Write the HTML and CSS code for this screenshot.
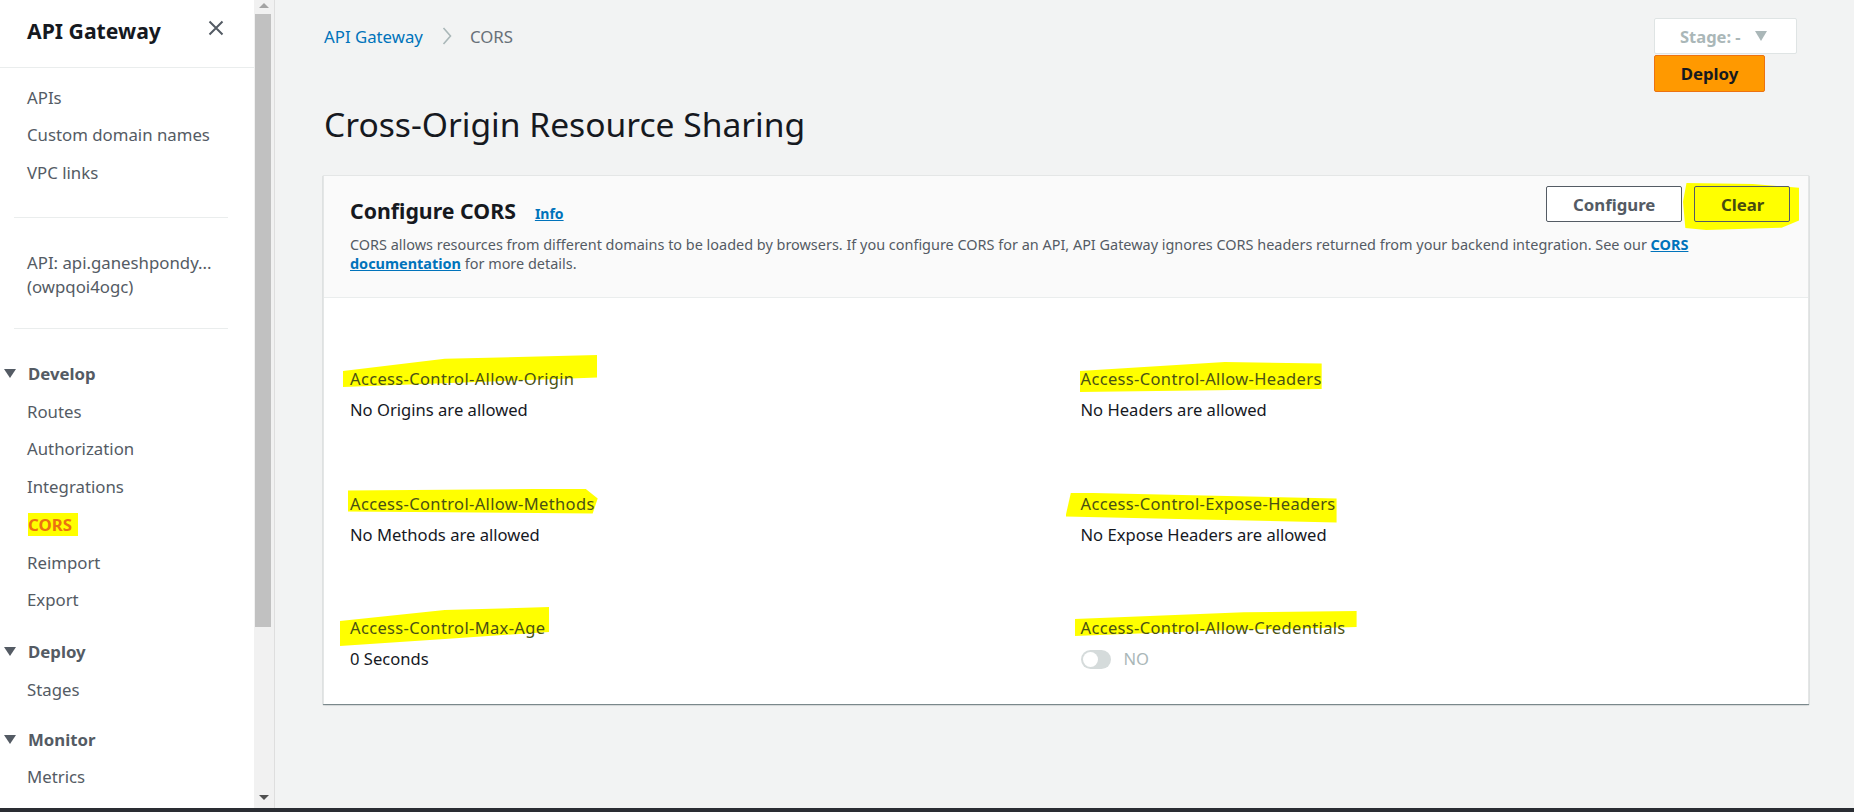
FILE: index.html
```html
<!DOCTYPE html>
<html lang="en">
<head>
<meta charset="utf-8">
<title>API Gateway - CORS</title>
<link rel="stylesheet" href="styles.css">
</head>
<body>
<div class="app">
  <aside class="sidebar">
    <div class="side-head">
      <span class="side-title">API Gateway</span>
      <svg class="close-icon" width="16" height="16" viewBox="0 0 16 16"><path d="M1.5 1.5 L14.5 14.5 M14.5 1.5 L1.5 14.5" stroke="#545b64" stroke-width="2" fill="none"/></svg>
    </div>
    <ul class="nav-list top-list">
      <li class="nav-item">APIs</li>
      <li class="nav-item">Custom domain names</li>
      <li class="nav-item">VPC links</li>
    </ul>
    <div class="side-div"></div>
    <div class="api-name">API: api.ganeshpondy...<br>(owpqoi4ogc)</div>
    <div class="side-div second"></div>
    <div class="section first">
      <div class="sec-head"><span class="caret"></span>Develop</div>
      <ul class="nav-list">
        <li class="nav-item">Routes</li>
        <li class="nav-item">Authorization</li>
        <li class="nav-item">Integrations</li>
        <li class="nav-item"><span class="active-hl">CORS</span></li>
        <li class="nav-item">Reimport</li>
        <li class="nav-item">Export</li>
      </ul>
    </div>
    <div class="section">
      <div class="sec-head"><span class="caret"></span>Deploy</div>
      <ul class="nav-list">
        <li class="nav-item">Stages</li>
      </ul>
    </div>
    <div class="section last">
      <div class="sec-head"><span class="caret"></span>Monitor</div>
      <ul class="nav-list">
        <li class="nav-item">Metrics</li>
      </ul>
    </div>
  </aside>
  <div class="scrollbar">
    <span class="sb-up"></span>
    <span class="sb-thumb"></span>
    <span class="sb-down"></span>
  </div>
  <main class="main">
    <div class="topbar">
      <div class="breadcrumb">
        <a class="crumb-link">API Gateway</a>
        <svg class="crumb-sep" width="10" height="18" viewBox="0 0 10 18"><path d="M1.5 1 L8.5 9 L1.5 17" stroke="#aab7b8" stroke-width="1.6" fill="none"/></svg>
        <span class="crumb-cur">CORS</span>
      </div>
      <div class="deploy-box">
        <div class="stage-btn"><span>Stage: -</span><span class="stage-caret"></span></div>
        <div class="deploy-btn">Deploy</div>
      </div>
    </div>
    <h1 class="page-title">Cross-Origin Resource Sharing</h1>
    <section class="card">
      <div class="card-head">
        <div class="card-row">
          <h2 class="card-title">Configure CORS</h2>
          <a class="info-link">Info</a>
          <div class="card-actions">
            <button class="btn">Configure</button>
            <button class="btn btn-clear">Clear</button>
          </div>
        </div>
        <p class="card-desc">CORS allows resources from different domains to be loaded by browsers. If you configure CORS for an API, API Gateway ignores CORS headers returned from your backend integration. See our <a class="doc-link">CORS<br>documentation</a> for more details.</p>
      </div>
      <div class="card-body">
        <div class="field">
          <div class="label"><span class="hl hl-1">Access-Control-Allow-Origin</span></div>
          <div class="value">No Origins are allowed</div>
        </div>
        <div class="field">
          <div class="label"><span class="hl hl-4">Access-Control-Allow-Headers</span></div>
          <div class="value">No Headers are allowed</div>
        </div>
        <div class="field">
          <div class="label"><span class="hl hl-2">Access-Control-Allow-Methods</span></div>
          <div class="value">No Methods are allowed</div>
        </div>
        <div class="field">
          <div class="label"><span class="hl hl-5">Access-Control-Expose-Headers</span></div>
          <div class="value">No Expose Headers are allowed</div>
        </div>
        <div class="field">
          <div class="label"><span class="hl hl-3">Access-Control-Max-Age</span></div>
          <div class="value">0 Seconds</div>
        </div>
        <div class="field">
          <div class="label"><span class="hl hl-6">Access-Control-Allow-Credentials</span></div>
          <div class="value toggle-row"><span class="toggle"><span class="knob"></span></span><span class="toggle-text">NO</span></div>
        </div>
      </div>
    </section>
  </main>
</div>
<div class="taskbar"></div>
</body>
</html>
```
FILE: styles.css
```css
* { box-sizing: border-box; }
html, body { margin: 0; padding: 0; }
body {
  font-family: "Noto Sans", "Open Sans", sans-serif;
  color: #16191f;
  background: #f2f3f3;
  overflow: hidden;
}
ul { list-style: none; margin: 0; padding: 0; }

.app {
  display: flex;
  height: 808px;
  overflow: hidden;
}

/* ---------- Sidebar ---------- */
.sidebar {
  width: 254px;
  flex: none;
  background: #ffffff;
  overflow: hidden;
}
.side-head {
  display: flex;
  align-items: flex-start;
  height: 68px;
  border-bottom: 1px solid #eaeded;
}
.side-title {
  margin: 16px 0 0 27px;
  font-size: 21.2px;
  font-weight: 700;
  line-height: 30px;
  color: #16191f;
}
.close-icon {
  margin: 20px 30px 0 auto;
  flex: none;
}
.top-list { padding-top: 11px; }
.nav-item {
  font-size: 16.8px;
  line-height: 22.5px;
  padding: 7.5px 0 7.5px 27px;
  color: #545b64;
  white-space: nowrap;
}
.side-div {
  margin: 25px 0 0 14px;
  width: 214px;
  border-top: 1px solid #eaeded;
}
.side-div.second { margin-top: 29px; }
.api-name {
  margin-top: 33px;
  padding-left: 27px;
  font-size: 16.8px;
  line-height: 24px;
  color: #545b64;
}
.section { margin-top: 13px; }
.section.first { margin-top: 25.5px; }
.section.last { margin-top: 11px; }
.sec-head {
  display: flex;
  align-items: center;
  height: 39px;
  padding-left: 4px;
  font-size: 16.8px;
  font-weight: 700;
  color: #545b64;
}
.caret {
  width: 0;
  height: 0;
  border-left: 6px solid transparent;
  border-right: 6px solid transparent;
  border-top: 9px solid #545b64;
  margin-right: 12px;
}
.active-hl {
  display: inline-block;
  background: #ffff00;
  color: #ec7211;
  font-weight: 700;
  line-height: 23px;
  padding-right: 6px;
  margin-left: 1px;
}

/* ---------- Scrollbar ---------- */
.scrollbar {
  width: 21px;
  flex: none;
  background: #f1f1f1;
  border-right: 1px solid #dedede;
  display: flex;
  flex-direction: column;
  align-items: center;
}
.sb-up {
  margin-top: 3px;
  width: 0; height: 0;
  border-left: 5px solid transparent;
  border-right: 5px solid transparent;
  border-bottom: 5px solid #a3a3a3;
}
.sb-thumb {
  margin-top: 6px;
  width: 16px;
  height: 613px;
  background: #c1c1c1;
  margin-left: -2px;
}
.sb-down {
  margin-top: auto;
  margin-bottom: 8px;
  width: 0; height: 0;
  border-left: 5px solid transparent;
  border-right: 5px solid transparent;
  border-top: 5px solid #505050;
}

/* ---------- Main ---------- */
.main {
  flex: 1;
  padding: 0 45px 0 48px;
  background: #f2f3f3;
}
.topbar {
  display: flex;
  justify-content: space-between;
  align-items: flex-start;
  padding-top: 18px;
}
.breadcrumb {
  display: flex;
  align-items: center;
  height: 36px;
  font-size: 16.8px;
  padding-left: 1px;
}
.crumb-link { color: #0073bb; }
.crumb-sep { margin: 0 18px 0 19px; }
.crumb-cur { color: #687078; }
.deploy-box {
  display: flex;
  flex-direction: column;
  align-items: flex-start;
  margin-right: 12px;
}
.stage-btn {
  width: 143px;
  height: 36px;
  background: #ffffff;
  border: 1px solid #dfe4e4;
  border-radius: 2px;
  display: flex;
  align-items: center;
  padding-left: 25px;
  font-size: 16.5px;
  font-weight: 700;
  color: #aab7b8;
}
.stage-caret {
  margin-left: 14px;
  width: 0; height: 0;
  border-left: 6px solid transparent;
  border-right: 6px solid transparent;
  border-top: 10px solid #aab7b8;
}
.deploy-btn {
  margin-top: 1px;
  width: 111px;
  height: 37px;
  background: #ff9900;
  border: 1px solid #ec7211;
  border-radius: 2px;
  display: flex;
  align-items: center;
  justify-content: center;
  font-size: 16.8px;
  font-weight: 700;
  color: #16191f;
}
.page-title {
  margin: 10px 0 29px 1px;
  font-size: 33.6px;
  font-weight: 400;
  line-height: 44px;
  color: #16191f;
}

/* ---------- Card ---------- */
.card {
  background: #ffffff;
  border: 1px solid #e4e6e6;
  border-bottom: none;
  box-shadow: 0 1px 1px 0 rgba(0, 28, 36, 0.45), 0 2px 2px -1px rgba(0, 28, 36, 0.12);
}
.card-head {
  position: relative;
  z-index: 0;
  background: #fafafa;
  border-bottom: 1px solid #eaeded;
  padding: 10px 18px 24px 26px;
}
.card-row {
  display: flex;
  align-items: flex-start;
}
.card-title {
  margin: 7px 0 0 0;
  font-size: 21.3px;
  font-weight: 700;
  line-height: 36px;
  color: #16191f;
}
.info-link {
  margin: 18px 0 0 19px;
  font-size: 14px;
  font-weight: 700;
  line-height: 20px;
  color: #0073bb;
  text-decoration: underline;
}
.card-actions {
  margin-left: auto;
  display: flex;
  gap: 12px;
}
.btn {
  height: 36px;
  padding: 0 26px;
  background: #ffffff;
  border: 1px solid #545b64;
  border-radius: 2px;
  font-family: inherit;
  font-size: 16.8px;
  font-weight: 700;
  color: #545b64;
}
.btn:first-child { width: 136px; }
.btn-clear {
  position: relative;
  width: 96px;
  background: #ffff00;
  color: #474c10;
}
.btn-clear::before {
  content: "";
  position: absolute;
  left: -12px;
  right: -10px;
  top: -4px;
  bottom: -9px;
  background: #ffff00;
  z-index: -1;
  clip-path: polygon(3% 0, 60% 2%, 100% 10%, 100% 80%, 85% 95%, 20% 100%, 2% 96%, 0 40%);
}
.card-desc {
  margin: 7px 0 0 0;
  font-size: 14.45px;
  line-height: 18.5px;
  color: #545b64;
}
.doc-link {
  color: #0073bb;
  font-weight: 700;
  text-decoration: underline;
}
.card-body {
  isolation: isolate;
  display: grid;
  grid-template-columns: 1fr 1fr;
  column-gap: 30px;
  row-gap: 71.5px;
  padding: 70px 27px 34px 26px;
}
.label {
  font-size: 16.5px;
  letter-spacing: 0.35px;
  line-height: 22px;
  color: #4a5114;
}
.value {
  margin-top: 9px;
  font-size: 16.6px;
  line-height: 22px;
  color: #16191f;
}
.hl {
  position: relative;
  display: inline-block;
}
.hl::before {
  content: "";
  position: absolute;
  background: #ffff00;
  z-index: -1;
}
.hl-1::before { left: -7px; right: -23px; top: -13px; bottom: 3px; clip-path: polygon(0 50%, 40% 12%, 100% 0, 100% 70%, 50% 85%, 0 100%); }
.hl-2::before { left: -2px; right: -3px; top: -4px; bottom: 1px; clip-path: polygon(0 8%, 95% 0, 100% 40%, 98% 100%, 0 92%); }
.hl-3::before { left: -10px; right: -4px; top: -10px; bottom: -7px; clip-path: polygon(0 36%, 50% 8%, 100% 0, 100% 64%, 50% 82%, 0 100%); }
.hl-4::before { left: -1px; right: 0; top: -6px; bottom: -2px; clip-path: polygon(0 30%, 60% 0, 100% 5%, 100% 90%, 40% 96%, 0 100%); }
.hl-5::before { left: -15px; right: -1px; top: 0; bottom: -8px; clip-path: polygon(2% 0, 100% 20%, 100% 100%, 50% 90%, 0 80%); }
.hl-6::before { left: -6px; right: -11px; top: -6px; bottom: 3px; clip-path: polygon(0 32%, 60% 5%, 100% 0, 100% 64%, 50% 78%, 0 100%); }

.toggle-row {
  display: flex;
  align-items: center;
  height: 22px;
}
.toggle {
  position: relative;
  width: 30px;
  height: 19px;
  border-radius: 10px;
  background: #d5dbdb;
}
.knob {
  position: absolute;
  left: 2px;
  top: 2px;
  width: 15px;
  height: 15px;
  border-radius: 50%;
  background: #ffffff;
}
.toggle-text {
  margin-left: 13px;
  color: #aab7b8;
}

.taskbar {
  height: 4px;
  background: #2a2d33;
}
```
